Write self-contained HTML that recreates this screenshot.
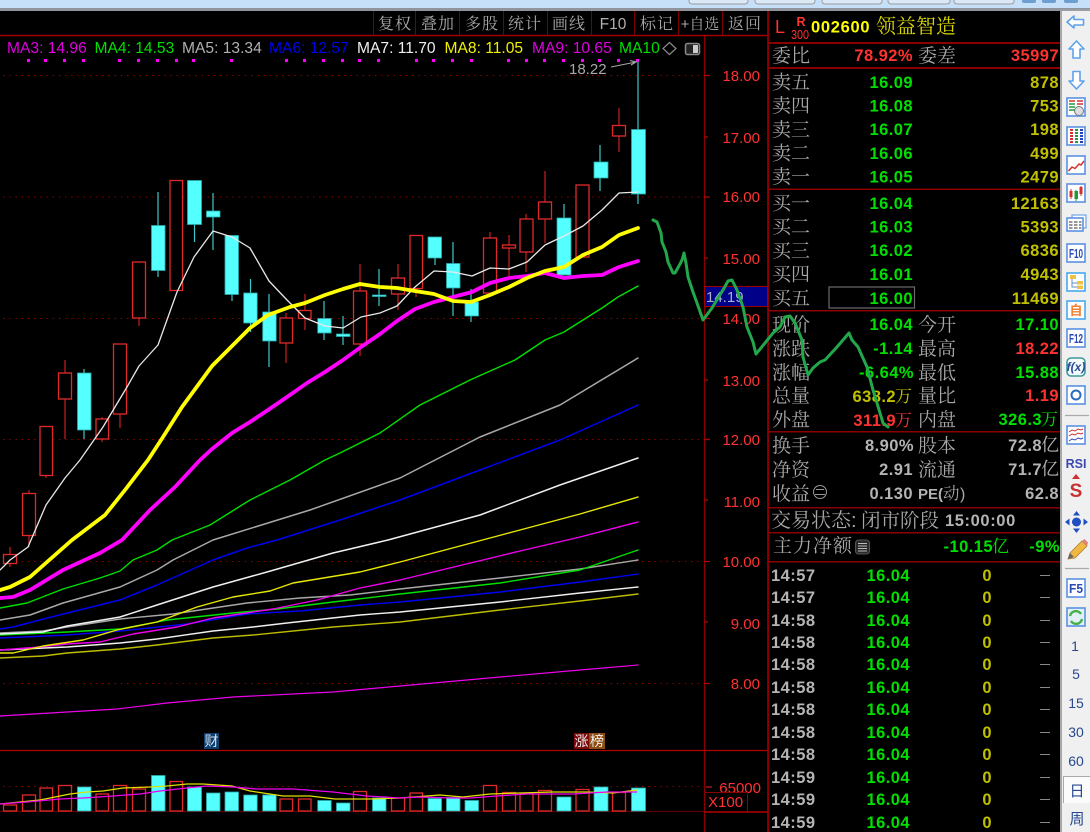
<!DOCTYPE html>
<html><head><meta charset="utf-8"><title>002600</title>
<style>
html,body{margin:0;padding:0;background:#000;width:1090px;height:832px;overflow:hidden}
svg{display:block;position:absolute;left:0;top:0}
text{font-family:"Liberation Sans","Noto Sans CJK SC",sans-serif}
.cj{font-family:"Liberation Sans","Noto Serif CJK SC",serif;font-size:19px;fill:#a8a8a8}
.tb{font-family:"Liberation Sans","Noto Serif CJK SC",serif;font-size:16px;fill:#a8a8a8;text-anchor:middle;letter-spacing:1px}
.n{font-weight:bold;font-size:16.5px;letter-spacing:.45px;text-anchor:end}
.g{fill:#00e000}.y{fill:#c0c000}.r{fill:#ff3232}.w{fill:#b4b4b4}
.ax{font-size:15px;fill:#ff3232;text-anchor:end}
.lg{font-size:15.6px}
.rb{fill:#000;stroke:#e02a2a;stroke-width:1.3}
.cb{fill:#54ffff;stroke:#2aa8a8;stroke-width:.8}
.si{fill:#fff;stroke:#5b92e4;stroke-width:1.6}
.sn{font-size:14px;fill:#27488f;text-anchor:middle}
</style></head><body>
<svg width="1090" height="832" viewBox="0 0 1090 832" xmlns="http://www.w3.org/2000/svg">
<rect width="1090" height="832" fill="#000"/>
<!-- top strip -->
<rect width="1090" height="8" fill="#c6e0f9"/>
<rect y="8" width="1090" height="3" fill="#8f959b"/>
<g fill="#dbe8f5" stroke="#9a9a9a"><rect x="689" y="-6" width="59" height="10" rx="3"/><rect x="755" y="-6" width="60" height="10" rx="3"/><rect x="822" y="-6" width="60" height="10" rx="3"/><rect x="888" y="-6" width="62" height="10" rx="3"/><rect x="954" y="-6" width="60" height="10" rx="3"/></g>
<g fill="#6f9fd0"><rect x="1022" y="-3" width="14" height="6" rx="2"/><rect x="1042" y="-3" width="14" height="6" rx="2"/><rect x="1064" y="-3" width="14" height="6" rx="2"/></g>

<!-- toolbar -->
<path d="M0 35.5H768" stroke="#a00000" stroke-width="1.5"/>
<path d="M373.500 11V36M415.500 11V36M459.500 11V36M503.500 11V36M547.500 11V36M591.500 11V36M634.500 11V36M678.500 11V36M722.500 11V36" stroke="#7a0000"/>
<text class="tb" x="395" y="29">复权</text><text class="tb" x="438" y="29">叠加</text><text class="tb" x="482" y="29">多股</text><text class="tb" x="525" y="29">统计</text><text class="tb" x="569" y="29">画线</text>
<text x="613" y="29" font-size="15.500" fill="#b0b0b0" text-anchor="middle">F10</text>
<text class="tb" x="657" y="29">标记</text>
<text class="tb" x="700" y="29" style="font-size:15px;letter-spacing:0">+自选</text>
<text class="tb" x="745" y="29">返回</text>

<!-- legend -->
<g class="lg" style="font-size:15.6px">
<text x="7" y="53" fill="#e000e0">MA3: 14.96</text>
<text x="94.500" y="53" fill="#00e000">MA4: 14.53</text>
<text x="182" y="53" fill="#b0b0b0">MA5: 13.34</text>
<text x="269" y="53" fill="#0000f0">MA6: 12.57</text>
<text x="357" y="53" fill="#f0f0f0">MA7: 11.70</text>
<text x="444.500" y="53" fill="#f0f000">MA8: 11.05</text>
<text x="532" y="53" fill="#e000e0">MA9: 10.65</text>
<text x="619" y="53" fill="#00e000">MA10</text>
</g>
<path d="M669.500 42.500L676 48.500L669.500 54.500L663 48.500Z" fill="none" stroke="#888" stroke-width="1.200"/>
<rect x="685.500" y="43.500" width="14" height="11" rx="2" fill="#222" stroke="#888" stroke-width="1.500"/><rect x="693" y="45" width="5" height="8" fill="#ccc"/>
<path fill="#ff00ff" d="M27 59h3v3h-3zM44 59h3v3h-3zM63 59h3v3h-3zM82 59h3v3h-3zM118 59h3v3h-3zM137 59h3v3h-3zM156 59h3v3h-3zM175 59h3v3h-3zM192 59h3v3h-3zM230 59h3v3h-3zM285 59h3v3h-3zM303 59h3v3h-3zM322 59h3v3h-3zM341 59h3v3h-3zM358 59h3v3h-3zM377 59h3v3h-3zM415 59h3v3h-3zM432 59h3v3h-3zM451 59h3v3h-3zM470 59h3v3h-3zM507 59h3v3h-3zM525 59h3v3h-3zM543 59h3v3h-3zM562 59h3v3h-3zM581 59h3v3h-3zM598 59h3v3h-3zM617 59h3v3h-3zM636 59h3v3h-3z"/>

<!-- grid -->
<g stroke="#8a0000" stroke-width="1" stroke-dasharray="1.500 4.700"><path d="M3 75.500H704M3 197H704M3 318.500H704M3 439.500H704M3 561.500H704M3 683.500H704M3 786.500H704"/></g>

<!-- axis -->
<path d="M704.500 36V832M767.700 11V832" stroke="#8a0000" stroke-width="1.200"/>
<path d="M704 75.500h6M704 137h4M704 197h6M704 258h4M704 318.500h6M704 380h4M704 439.500h6M704 500h4M704 561.500h6M704 622h4M704 683.500h6" stroke="#b00000" stroke-width="1.200"/>
<g class="ax">
<text x="760" y="81" class="ax">18.00</text><text x="760" y="143" class="ax">17.00</text><text x="760" y="202" class="ax">16.00</text><text x="760" y="264" class="ax">15.00</text><text x="760" y="324" class="ax">14.00</text><text x="760" y="386" class="ax">13.00</text><text x="760" y="445" class="ax">12.00</text><text x="760" y="507" class="ax">11.00</text><text x="760" y="567" class="ax">10.00</text><text x="760" y="629" class="ax">9.00</text><text x="760" y="689" class="ax">8.00</text>
</g>
<rect x="704.500" y="286.500" width="63" height="20" fill="#000088" stroke="#a00000"/>
<text x="706" y="302" font-size="15" fill="#a9b0c8">14.19</text>

<!-- red wicks -->
<path stroke="#c82020" stroke-width="1.200" fill="none" d="M10 547V567M29 490V547M46 426V478M65 360V439M102 417V442M120 344V428M139 262V326M176 180V290M286 313V363M305 294V330M360 264V356M398 264V310M416 235V297M490 232V295M509 235V276M526 214V272M545 171V243M582 185V257M619 108V152"/>
<!-- cyan wicks -->
<path stroke="#3cc8c8" stroke-width="1.200" fill="none" d="M84 369V439M158 192V277M194.500 180V242M213 193V250M232 235V301M250.500 279V332M269 294V367M324 301V340M343 316V345M379 269V306M435 237V265M453 242V316M471 289V322M564 204V275M600 145V191M638 62V204"/>
<!-- red bodies -->
<g class="rb">
<rect class="rb" x="3.500" y="554.500" width="13" height="9"/><rect class="rb" x="22.500" y="493.500" width="13" height="42"/><rect class="rb" x="40" y="426.500" width="12.500" height="49"/><rect class="rb" x="58.500" y="373" width="13" height="26"/><rect class="rb" x="96" y="419" width="12.500" height="20"/><rect class="rb" x="113.500" y="344" width="13" height="70"/><rect class="rb" x="132.500" y="262" width="13" height="56"/><rect class="rb" x="170" y="180.500" width="12.500" height="110"/><rect class="rb" x="280" y="318" width="12.500" height="25"/><rect class="rb" x="298.500" y="310.500" width="12.500" height="8"/><rect class="rb" x="353.500" y="291" width="13" height="53"/><rect class="rb" x="391.500" y="278" width="13" height="16"/><rect class="rb" x="410" y="235.500" width="12.500" height="53"/><rect class="rb" x="483.500" y="238" width="13" height="55"/><rect class="rb" x="502.500" y="245" width="13" height="3"/><rect class="rb" x="520" y="219" width="13" height="33"/><rect class="rb" x="538.500" y="202" width="13" height="17"/><rect class="rb" x="576" y="185" width="13" height="72"/><rect class="rb" x="612.500" y="125.500" width="13" height="10.500"/>
</g>
<!-- cyan bodies -->
<g class="cb">
<rect class="cb" x="77.500" y="373" width="13.500" height="57"/><rect class="cb" x="151.500" y="225.500" width="13.500" height="45"/><rect class="cb" x="187.500" y="180.500" width="14" height="44"/><rect class="cb" x="206.500" y="211" width="13.500" height="6"/><rect class="cb" x="225" y="235.500" width="13.500" height="59"/><rect class="cb" x="243.700" y="293" width="13.500" height="30"/><rect class="cb" x="262.700" y="312" width="13.500" height="29"/><rect class="cb" x="317.700" y="318.500" width="13.500" height="14.500"/><rect class="cb" x="336.500" y="334" width="13.500" height="2.500"/><rect class="cb" x="372.500" y="295" width="13.500" height="1.500"/><rect class="cb" x="428" y="237" width="13.500" height="21"/><rect class="cb" x="446.500" y="263.500" width="13.500" height="24.500"/><rect class="cb" x="465" y="302" width="13.500" height="14"/><rect class="cb" x="557" y="218" width="14" height="57"/><rect class="cb" x="594" y="162" width="14" height="16"/><rect class="cb" x="631.500" y="129.500" width="14" height="64.500"/>
</g>

<!-- thin MAs -->
<g fill="none" stroke-linejoin="round" stroke-linecap="round">
<polyline stroke="#ee00ee" stroke-width="1.200" points="0,716 117,709 167,703 233,697 333,692 400,686 500,677 580,670 638,665"/>
<polyline stroke="#bcbc00" stroke-width="1.400" points="0,658 43,656 67,653 120,649 157,645 213,638 253,635 333,627 400,622 500,610 580,601 638,594"/>
<polyline stroke="#f0f0f0" stroke-width="1.400" points="0,650 67,647 120,643 157,639 213,631 253,627 287,623 360,615 400,612 500,602 580,593 638,587"/>
<polyline stroke="#0000f0" stroke-width="1.400" points="0,638 67,635 120,631 187,624 247,614 300,611 360,605 400,602 500,592 580,582 638,574"/>
<polyline stroke="#a8a8a8" stroke-width="1.400" points="0,633 43,631 67,627 120,619 173,614 247,603 300,598 350,595 400,589 500,578 580,569 638,560"/>
<polyline stroke="#00e000" stroke-width="1.400" points="0,635 67,632 120,629 167,620 233,613 277,609 333,602 400,594 500,583 580,570 638,550"/>
<polyline stroke="#ee00ee" stroke-width="1.400" points="0,650 40,647 67,644 100,642 133,634 177,627 213,618 273,609 317,600 360,588 400,580 520,551 580,537 638,522"/>
<polyline stroke="#e8e800" stroke-width="1.400" points="0,653 13,653 43,646 83,640 117,630 157,622 197,607 233,597 270,591 293,583 360,572 400,562 520,530 580,514 638,497"/>
<polyline stroke="#f0f0f0" stroke-width="1.500" points="0,634 43,632 67,626 120,617 157,605 213,587 267,572 333,553 388,540 480,515 560,485 638,458"/>
<polyline stroke="#0000f0" stroke-width="1.500" points="0,629 13,627 63,614 120,600 157,585 213,560 247,548 277,540 340,520 400,500 480,470 560,440 638,405"/>
<polyline stroke="#a8a8a8" stroke-width="1.500" points="0,620 30,615 63,603 120,587 157,570 173,560 213,540 310,510 400,478 480,437 560,405 638,358"/>
<polyline stroke="#00e000" stroke-width="1.400" points="0,608 27,603 63,589 100,578 120,571 133,560 157,550 172,540 210,525 250,500 290,480 325,460 340,453 362,442 380,433 420,405 470,380 515,360 545,340 564,332 583,320 602,308 618,297 638,286"/>
<polyline stroke="#e8e8e8" stroke-width="1.300" points="0,570 10,560 28,547 46,505 65,478 80,460 103,427 127,387 139,366 158,345 177,292 194,257 213,231 232,237 250,248 269,281 287,300 305,318 325,326 343,328 361,317 380,313 397,306 415,287 434,271 453,272 472,276 490,268 509,269 527,262 545,245 564,236 583,226 602,210 619,193 638,192"/>
<polyline stroke="#ff00ff" stroke-width="3.800" points="0,598 13,597 30,590 63,570 100,553 122,540 150,510 175,487 200,460 212,449 232,433 250,422 268,410 287,397 307,383 325,372 343,360 361,347 380,334 397,321 415,309 434,302 453,297 472,292 490,283 509,278 527,276 545,273 564,278 583,276 602,275 619,267 638,261"/>
<polyline stroke="#ffff00" stroke-width="3.800" points="0,590 10,587 30,577 47,562 72,540 105,515 125,490 148,460 163,437 182,407 212,366 250,328 268,315 290,307 305,303 325,295 343,289 360,284 380,287 397,288 415,291 434,294 453,301 471,302 490,295 509,287 527,278 545,271 564,267 583,255 602,247 619,235 638,228"/>
</g>

<!-- high label -->
<text x="569" y="74" font-size="15" fill="#a8a8a8">18.22</text>
<path d="M611 67L636 62M630 60.500L636 62L631 65" fill="none" stroke="#a8a8a8" stroke-width="1.100"/>

<!-- badges -->
<rect x="204" y="733" width="15" height="16" fill="#0c3e6e"/><text x="211.500" y="746" font-size="14" fill="#d8e4f0" text-anchor="middle">财</text>
<rect x="574" y="733" width="15" height="16" fill="#7c0a0a"/><text x="581.500" y="746" font-size="14" fill="#eee" text-anchor="middle">涨</text>
<rect x="589" y="733" width="16" height="16" fill="#8c4c12"/><text x="597" y="746" font-size="14" fill="#eee" text-anchor="middle">榜</text>

<!-- volume frame -->
<path d="M0 750.500H768" stroke="#b00000" stroke-width="1.300"/>
<path d="M0 811.500H704" stroke="#5a0000" stroke-width="1.300"/>
<path d="M704 812H768" stroke="#b00000" stroke-width="1.600"/>
<path d="M706 787h6" stroke="#c02020" stroke-width="1.200"/>
<text x="761" y="793" class="ax">65000</text>
<rect x="704.500" y="792.500" width="43" height="19" fill="none" stroke="#8a0000"/>
<text x="708" y="807" class="ax" style="text-anchor:start">X100</text>

<!-- volume bars -->
<g>
<rect class="rb" x="3.500" y="805" width="13" height="6"/><rect class="rb" x="22.500" y="795" width="13" height="16"/><rect class="rb" x="40" y="788" width="12.500" height="23"/><rect class="rb" x="58.500" y="785.500" width="13" height="25.500"/><rect class="rb" x="96" y="794" width="12.500" height="17"/><rect class="rb" x="113.500" y="785.500" width="13" height="25.500"/><rect class="rb" x="132.500" y="789" width="13" height="22"/><rect class="rb" x="170" y="781.500" width="12.500" height="29.500"/><rect class="rb" x="280" y="799" width="12.500" height="12"/><rect class="rb" x="298.500" y="799" width="12.500" height="12"/><rect class="rb" x="353.500" y="791.500" width="13" height="19.500"/><rect class="rb" x="391.500" y="798" width="13" height="13"/><rect class="rb" x="410" y="793" width="12.500" height="18"/><rect class="rb" x="483.500" y="785.500" width="13" height="25.500"/><rect class="rb" x="502.500" y="792.500" width="13" height="18.500"/><rect class="rb" x="520" y="793.500" width="13" height="17.500"/><rect class="rb" x="538.500" y="790.500" width="13" height="20.500"/><rect class="rb" x="576" y="789.500" width="13" height="21.500"/><rect class="rb" x="612.500" y="792.500" width="13" height="18.500"/>
<rect class="cb" x="77.500" y="787" width="13.500" height="24"/><rect class="cb" x="151.500" y="775.500" width="13.500" height="35.500"/><rect class="cb" x="187.500" y="787" width="14" height="24"/><rect class="cb" x="206.500" y="793" width="13.500" height="18"/><rect class="cb" x="225" y="792" width="13.500" height="19"/><rect class="cb" x="243.700" y="795" width="13.500" height="16"/><rect class="cb" x="262.700" y="795" width="13.500" height="16"/><rect class="cb" x="317.700" y="800.500" width="13.500" height="10.500"/><rect class="cb" x="336.500" y="803" width="13.500" height="8"/><rect class="cb" x="372.500" y="798" width="13.500" height="13"/><rect class="cb" x="428" y="798.500" width="13.500" height="12.500"/><rect class="cb" x="446.500" y="797.500" width="13.500" height="13.500"/><rect class="cb" x="465" y="800.500" width="13.500" height="10.500"/><rect class="cb" x="557" y="797" width="14" height="14"/><rect class="cb" x="594" y="787" width="14" height="24"/><rect class="cb" x="631.500" y="788" width="14" height="23"/>
</g>
<polyline fill="none" stroke="#e0e000" stroke-width="1.300" points="0,804 20,802 40,800 70,794 87,792 103,791 123,788 150,787 167,786 187,784 203,784 232,786 250,791 283,796 310,796 335,799 370,799 400,798 427,796 440,795 463,797 490,794 520,793 553,792 587,792 613,793 637,790"/>
<polyline fill="none" stroke="#ee00ee" stroke-width="1.300" points="0,804 27,802 60,799 83,798 113,796 140,794 160,791 187,788 207,786 233,787 257,789 293,789 333,792 367,796 400,798 420,797 453,798 470,798 497,796 527,794 573,794 607,792 637,792"/>

<!-- right panel -->
<rect x="768" y="11" width="292" height="821" fill="#000"/>
<path d="M768.500 11V832" stroke="#8a0000" stroke-width="1.200"/>
<text x="775" y="33" font-size="18" fill="#ff3232">L</text>
<text x="801" y="26" font-size="12.500" font-weight="bold" fill="#ff3232" text-anchor="middle">R</text>
<text x="800" y="39" font-size="13" fill="#ff3232" text-anchor="middle" textLength="18" lengthAdjust="spacingAndGlyphs">300</text>
<text x="811" y="32.500" font-size="16.500" font-weight="bold" fill="#ffff00" letter-spacing=".7">002600</text>
<text x="876" y="33" font-size="20" fill="#d8d800" style="font-family:'Noto Serif CJK SC',serif">领益智造</text>
<g fill="#8a0000">
<rect x="768" y="42" width="292" height="2"/><rect x="768" y="67" width="292" height="2"/><rect x="768" y="188.500" width="292" height="1.500"/><rect x="768" y="310" width="292" height="1.500"/><rect x="768" y="431" width="292" height="1.500"/><rect x="768" y="507" width="292" height="1.500"/><rect x="768" y="532" width="292" height="1.500"/><rect x="768" y="561" width="292" height="1.500"/>
</g>

<!-- quotes -->
<text class="cj" x="772" y="62">委比</text><text class="n r" x="913" y="61">78.92%</text><text class="cj" x="918" y="62">委差</text><text class="n r" x="1059" y="61">35997</text>
<text class="cj" x="772" y="88.500">卖五</text><text class="n g" x="913" y="88">16.09</text><text class="n y" x="1059" y="88">878</text>
<text class="cj" x="772" y="112">卖四</text><text class="n g" x="913" y="111.500">16.08</text><text class="n y" x="1059" y="111.500">753</text>
<text class="cj" x="772" y="136">卖三</text><text class="n g" x="913" y="135">16.07</text><text class="n y" x="1059" y="135">198</text>
<text class="cj" x="772" y="159.500">卖二</text><text class="n g" x="913" y="159">16.06</text><text class="n y" x="1059" y="159">499</text>
<text class="cj" x="772" y="183">卖一</text><text class="n g" x="913" y="182.500">16.05</text><text class="n y" x="1059" y="182.500">2479</text>
<text class="cj" x="772" y="209.500">买一</text><text class="n g" x="913" y="209">16.04</text><text class="n y" x="1059" y="209">12163</text>
<text class="cj" x="772" y="233">买二</text><text class="n g" x="913" y="232.500">16.03</text><text class="n y" x="1059" y="232.500">5393</text>
<text class="cj" x="772" y="257">买三</text><text class="n g" x="913" y="256">16.02</text><text class="n y" x="1059" y="256">6836</text>
<text class="cj" x="772" y="280.500">买四</text><text class="n g" x="913" y="280">16.01</text><text class="n y" x="1059" y="280">4943</text>
<rect x="829" y="287" width="85.500" height="21" fill="none" stroke="#6a6a6a" stroke-width="1.200"/>
<text class="cj" x="772" y="304.500">买五</text><text class="n g" x="913" y="304">16.00</text><text class="n y" x="1059" y="304">11469</text>

<text class="cj" x="772" y="331">现价</text><text class="n g" x="913" y="330">16.04</text><text class="cj" x="918" y="331">今开</text><text class="n g" x="1059" y="330">17.10</text>
<text class="cj" x="772" y="355">涨跌</text><text class="n g" x="913" y="354">-1.14</text><text class="cj" x="918" y="355">最高</text><text class="n r" x="1059" y="354">18.22</text>
<text class="cj" x="772" y="379">涨幅</text><text class="n g" x="914" y="378">-6.64%</text><text class="cj" x="918" y="379">最低</text><text class="n g" x="1059" y="378">15.88</text>
<text class="cj" x="772" y="402">总量</text><text class="n y" x="896" y="402">638.2</text><text x="895" y="402" font-size="17" fill="#c0c000" style="font-family:'Noto Serif CJK SC',serif">万</text><text class="cj" x="918" y="402">量比</text><text class="n r" x="1059" y="401">1.19</text>
<text class="cj" x="772" y="426">外盘</text><text class="n r" x="896" y="426">311.9</text><text x="895" y="426" font-size="17" fill="#ff3232" style="font-family:'Noto Serif CJK SC',serif">万</text><text class="cj" x="918" y="426">内盘</text><text class="n g" x="1042" y="425">326.3</text><text x="1041" y="425" font-size="17" fill="#00e000" style="font-family:'Noto Serif CJK SC',serif">万</text>

<text class="cj" x="772" y="452">换手</text><text class="n w" x="914" y="451">8.90%</text><text class="cj" x="918" y="452">股本</text><text class="n w" x="1042" y="451">72.8</text><text x="1041" y="451" font-size="18" fill="#b4b4b4" style="font-family:'Noto Serif CJK SC',serif">亿</text>
<text class="cj" x="772" y="476">净资</text><text class="n w" x="913" y="475">2.91</text><text class="cj" x="918" y="476">流通</text><text class="n w" x="1042" y="475">71.7</text><text x="1041" y="475" font-size="18" fill="#b4b4b4" style="font-family:'Noto Serif CJK SC',serif">亿</text>
<text class="cj" x="772" y="500">收益</text>
<circle cx="820" cy="492" r="6.500" fill="none" stroke="#999"/><path d="M816 489.500h8M815 494.500h10" stroke="#999"/>
<text class="n w" x="913" y="499">0.130</text><text x="918" y="499" font-size="15" font-weight="bold" fill="#b4b4b4">PE(</text><text x="943" y="499" font-size="16.500" fill="#a8a8a8" style="font-family:'Noto Serif CJK SC',serif">动</text><text x="960" y="499" font-size="16" fill="#a8a8a8">)</text><text class="n w" x="1059" y="499">62.8</text>

<text x="771" y="527" class="cj" style="font-size:20px">交易状态:</text>
<text x="861" y="527" class="cj" style="font-size:19.500px">闭市阶段</text>
<text x="945" y="526" font-size="16.500" font-weight="bold" fill="#b4b4b4" letter-spacing=".6">15:00:00</text>
<text class="cj" x="773" y="552" style="letter-spacing:1px">主力净额</text>
<rect x="855.500" y="540" width="14" height="14" rx="3" fill="#2a2a2a" stroke="#555"/><path d="M858 543.500h9M858 546h9M858 548.500h9M858 551h9" stroke="#bbb"/>
<text class="n g" x="993" y="552">-10.15</text><text x="992" y="552" font-size="17" fill="#00e000" style="font-family:'Noto Serif CJK SC',serif">亿</text>
<text class="n g" x="1060" y="552">-9%</text>

<!-- ticks -->
<g>
<text class="n w" x="771" y="581" style="text-anchor:start">14:57</text><text class="n g" x="910" y="581">16.04</text><text class="n y" x="992" y="581">0</text><path d="M1040 575.500h10" stroke="#8a8a8a"/>
<text class="n w" x="771" y="603" style="text-anchor:start">14:57</text><text class="n g" x="910" y="603">16.04</text><text class="n y" x="992" y="603">0</text><path d="M1040 597.500h10" stroke="#8a8a8a"/>
<text class="n w" x="771" y="626" style="text-anchor:start">14:58</text><text class="n g" x="910" y="626">16.04</text><text class="n y" x="992" y="626">0</text><path d="M1040 620.500h10" stroke="#8a8a8a"/>
<text class="n w" x="771" y="648" style="text-anchor:start">14:58</text><text class="n g" x="910" y="648">16.04</text><text class="n y" x="992" y="648">0</text><path d="M1040 642.500h10" stroke="#8a8a8a"/>
<text class="n w" x="771" y="670" style="text-anchor:start">14:58</text><text class="n g" x="910" y="670">16.04</text><text class="n y" x="992" y="670">0</text><path d="M1040 664.500h10" stroke="#8a8a8a"/>
<text class="n w" x="771" y="693" style="text-anchor:start">14:58</text><text class="n g" x="910" y="693">16.04</text><text class="n y" x="992" y="693">0</text><path d="M1040 687.500h10" stroke="#8a8a8a"/>
<text class="n w" x="771" y="715" style="text-anchor:start">14:58</text><text class="n g" x="910" y="715">16.04</text><text class="n y" x="992" y="715">0</text><path d="M1040 709.500h10" stroke="#8a8a8a"/>
<text class="n w" x="771" y="738" style="text-anchor:start">14:58</text><text class="n g" x="910" y="738">16.04</text><text class="n y" x="992" y="738">0</text><path d="M1040 732.500h10" stroke="#8a8a8a"/>
<text class="n w" x="771" y="760" style="text-anchor:start">14:58</text><text class="n g" x="910" y="760">16.04</text><text class="n y" x="992" y="760">0</text><path d="M1040 754.500h10" stroke="#8a8a8a"/>
<text class="n w" x="771" y="783" style="text-anchor:start">14:59</text><text class="n g" x="910" y="783">16.04</text><text class="n y" x="992" y="783">0</text><path d="M1040 777.500h10" stroke="#8a8a8a"/>
<text class="n w" x="771" y="805" style="text-anchor:start">14:59</text><text class="n g" x="910" y="805">16.04</text><text class="n y" x="992" y="805">0</text><path d="M1040 799.500h10" stroke="#8a8a8a"/>
<text class="n w" x="771" y="828" style="text-anchor:start">14:59</text><text class="n g" x="910" y="828">16.04</text><text class="n y" x="992" y="828">0</text><path d="M1040 822.500h10" stroke="#8a8a8a"/>
</g>

<!-- sidebar -->
<rect x="1060" y="9" width="30" height="823" fill="#f0f0f0"/>
<rect x="1060" y="9" width="2" height="823" fill="#a8a8a8"/>
<rect x="1060" y="9" width="30" height="2" fill="#9a9fa5"/>
<g fill="#fff" stroke="#5fa2ea" stroke-width="1.600" stroke-linejoin="round">
<path d="M1067 22L1074 16V19.500H1083.500V25H1074V28Z"/>
<path d="M1076.500 41L1084 49H1080V58H1073V49H1069Z"/>
<path d="M1076.500 89L1084 81H1080V71.500H1073V81H1069Z"/>
</g>
<!-- box icons -->
<rect class="si" x="1067" y="98" width="18" height="18"/><path d="M1069 101h6M1077 101h6" stroke="#d03030" stroke-width="1.500"/><path d="M1069 104h6M1069 107h6M1069 110h6" stroke="#1e9a3e" stroke-width="1.500"/><path d="M1077 104h6" stroke="#d03030" stroke-width="1.500"/><circle cx="1079" cy="111" r="4.500" fill="#ddd" stroke="#777"/>
<rect class="si" x="1067" y="127" width="18" height="18"/><path d="M1070 130h3M1070 133h3M1070 136h3M1070 139h3M1070 142h3" stroke="#d03030" stroke-width="2"/><path d="M1075 130h3M1075 133h3M1075 136h3M1075 139h3M1075 142h3" stroke="#1e9a3e" stroke-width="2"/><path d="M1080 130h3M1080 133h3M1080 136h3M1080 139h3M1080 142h3" stroke="#2a3ec0" stroke-width="2"/>
<rect class="si" x="1067" y="156" width="18" height="18"/><path d="M1068.500 171L1072 167L1075 168.500L1079 164L1081 165L1084 161" fill="none" stroke="#d83030" stroke-width="1.500"/>
<rect class="si" x="1067" y="184" width="18" height="18"/><path d="M1071 189V199M1081 186V196" stroke="#d03030" stroke-width="1"/><rect x="1069.500" y="191" width="3" height="6" fill="#d03030"/><path d="M1076 190V201" stroke="#1e9a3e"/><rect x="1074.500" y="191" width="3.500" height="8" fill="#1e9a3e"/><rect x="1079.500" y="187" width="3" height="7" fill="#d03030"/>
<rect x="1072" y="215" width="14" height="13" fill="#fff" stroke="#7aa8e6" stroke-width="1.300"/><rect class="si" x="1067" y="218" width="16" height="13"/><path d="M1069 222h3.500M1074 222h3.500M1079 222h2.500M1069 225h3.500M1074 225h3.500M1079 225h2.500M1069 228h3.500M1074 228h3.500M1079 228h2.500" stroke="#777" stroke-width="1.500"/>
<rect class="si" x="1067" y="244" width="18" height="18"/><text x="1069" y="258" font-size="13" font-weight="bold" fill="#2a4ab0" textLength="14" lengthAdjust="spacingAndGlyphs">F10</text>
<rect class="si" x="1067" y="273" width="18" height="18" style="stroke:#4aa8ee"/><rect x="1070" y="275" width="6" height="4" fill="#f0c040"/><path d="M1072 279V287H1077M1072 283H1077" fill="none" stroke="#5a8fd0"/><rect x="1077" y="281" width="6" height="3.500" fill="#f0c040"/><rect x="1077" y="285.500" width="6" height="3.500" fill="#f0c040"/>
<rect class="si" x="1067" y="301" width="18" height="18" style="stroke:#4aa8ee"/><text x="1076" y="315" font-size="13" font-weight="bold" fill="#f08030" text-anchor="middle">自</text>
<rect class="si" x="1067" y="329" width="18" height="18"/><text x="1069" y="343" font-size="13" font-weight="bold" fill="#2a4ab0" textLength="14" lengthAdjust="spacingAndGlyphs">F12</text>
<rect x="1067" y="358" width="18" height="18" rx="4" fill="#f4fbfb" stroke="#3d9a9a" stroke-width="1.600"/><text x="1076" y="371" font-size="12" font-style="italic" font-weight="bold" fill="#274a9a" text-anchor="middle">f(x)</text>
<rect class="si" x="1067" y="386" width="18" height="18"/><circle cx="1076" cy="395" r="4.500" fill="none" stroke="#2a6ac0" stroke-width="2"/>
<path d="M1065 415.500H1089" stroke="#aaa" stroke-width="1.300"/>
<rect class="si" x="1067" y="426" width="18" height="18"/><path d="M1069 432l3-2 3 1 3-2 3 1 2-1M1069 436l3-2 3 1 3-2 3 1 2-1" fill="none" stroke="#d03030"/><path d="M1069 441l3-2 3 1 3-2 3 1 2-1" fill="none" stroke="#3040c0"/>
<text x="1076" y="468" font-size="12.500" font-weight="bold" fill="#3b48b0" text-anchor="middle">RSI</text>
<path d="M1076 474L1072 479H1080Z" fill="#d03030"/><text x="1076" y="497" font-size="19" font-weight="bold" fill="#c83030" text-anchor="middle">S</text>
<g fill="#1f4fc0"><path d="M1076.500 511L1080 515.500H1073Z"/><path d="M1076.500 533L1080 528.500H1073Z"/><path d="M1065 522L1069.500 518.500V525.500Z"/><path d="M1088 522L1083.500 518.500V525.500Z"/><circle cx="1076.500" cy="522" r="4.500"/></g>
<path d="M1068 559L1070 553L1082 541L1087 546L1075 558Z" fill="#f0b840" stroke="#b08030" stroke-width=".8"/><path d="M1082 541L1084.500 539L1088 542.500L1087 546Z" fill="#e08080"/><path d="M1068 559L1070 553L1074 557Z" fill="#666"/>
<path d="M1065 568.500H1089" stroke="#aaa" stroke-width="1.300"/>
<rect class="si" x="1067" y="579" width="18" height="18"/><text x="1069" y="593" font-size="13" font-weight="bold" fill="#2a4ab0" textLength="14" lengthAdjust="spacingAndGlyphs">F5</text>
<rect class="si" x="1067" y="608" width="18" height="18" style="fill:#e2eef8"/><path d="M1070 616A6 6 0 0 1 1081 614" fill="none" stroke="#45b045" stroke-width="2.400"/><path d="M1082 619A6 6 0 0 1 1071 621" fill="none" stroke="#45b045" stroke-width="2.400"/>
<text class="sn" x="1075" y="651">1</text><text class="sn" x="1076" y="679">5</text><text class="sn" x="1076" y="708">15</text><text class="sn" x="1076" y="737">30</text><text class="sn" x="1076" y="766">60</text>
<rect x="1063" y="776" width="27" height="27" fill="#fbfbfb"/><path d="M1063.500 803V776.500H1090" fill="none" stroke="#aaa"/>
<text x="1077" y="796" font-size="15" fill="#27488f" text-anchor="middle">日</text>
<text x="1077" y="824" font-size="15" fill="#27488f" text-anchor="middle">周</text>

<!-- hand drawn green line -->
<polyline fill="none" stroke="#22a84a" stroke-width="3" stroke-linejoin="round" stroke-linecap="round" points="653,220 657,222 661,233 662,242 666,252 668,262 673,273 675,273 680,264 682,260 684,253 686,263 688,277 693,292 697,303 703,320 712,308 718,298 723,290 728,281 732,280 737,290 743,307 747,327 753,342 756,354 765,343 773,333 780,327 785,317 790,316 795,323 802,340 803,357 808,375 813,368 820,362 825,360 837,347 843,340 849,333 852,340 858,347 867,367 873,390 880,413 883,423 888,427"/>
</svg>
</body></html>
